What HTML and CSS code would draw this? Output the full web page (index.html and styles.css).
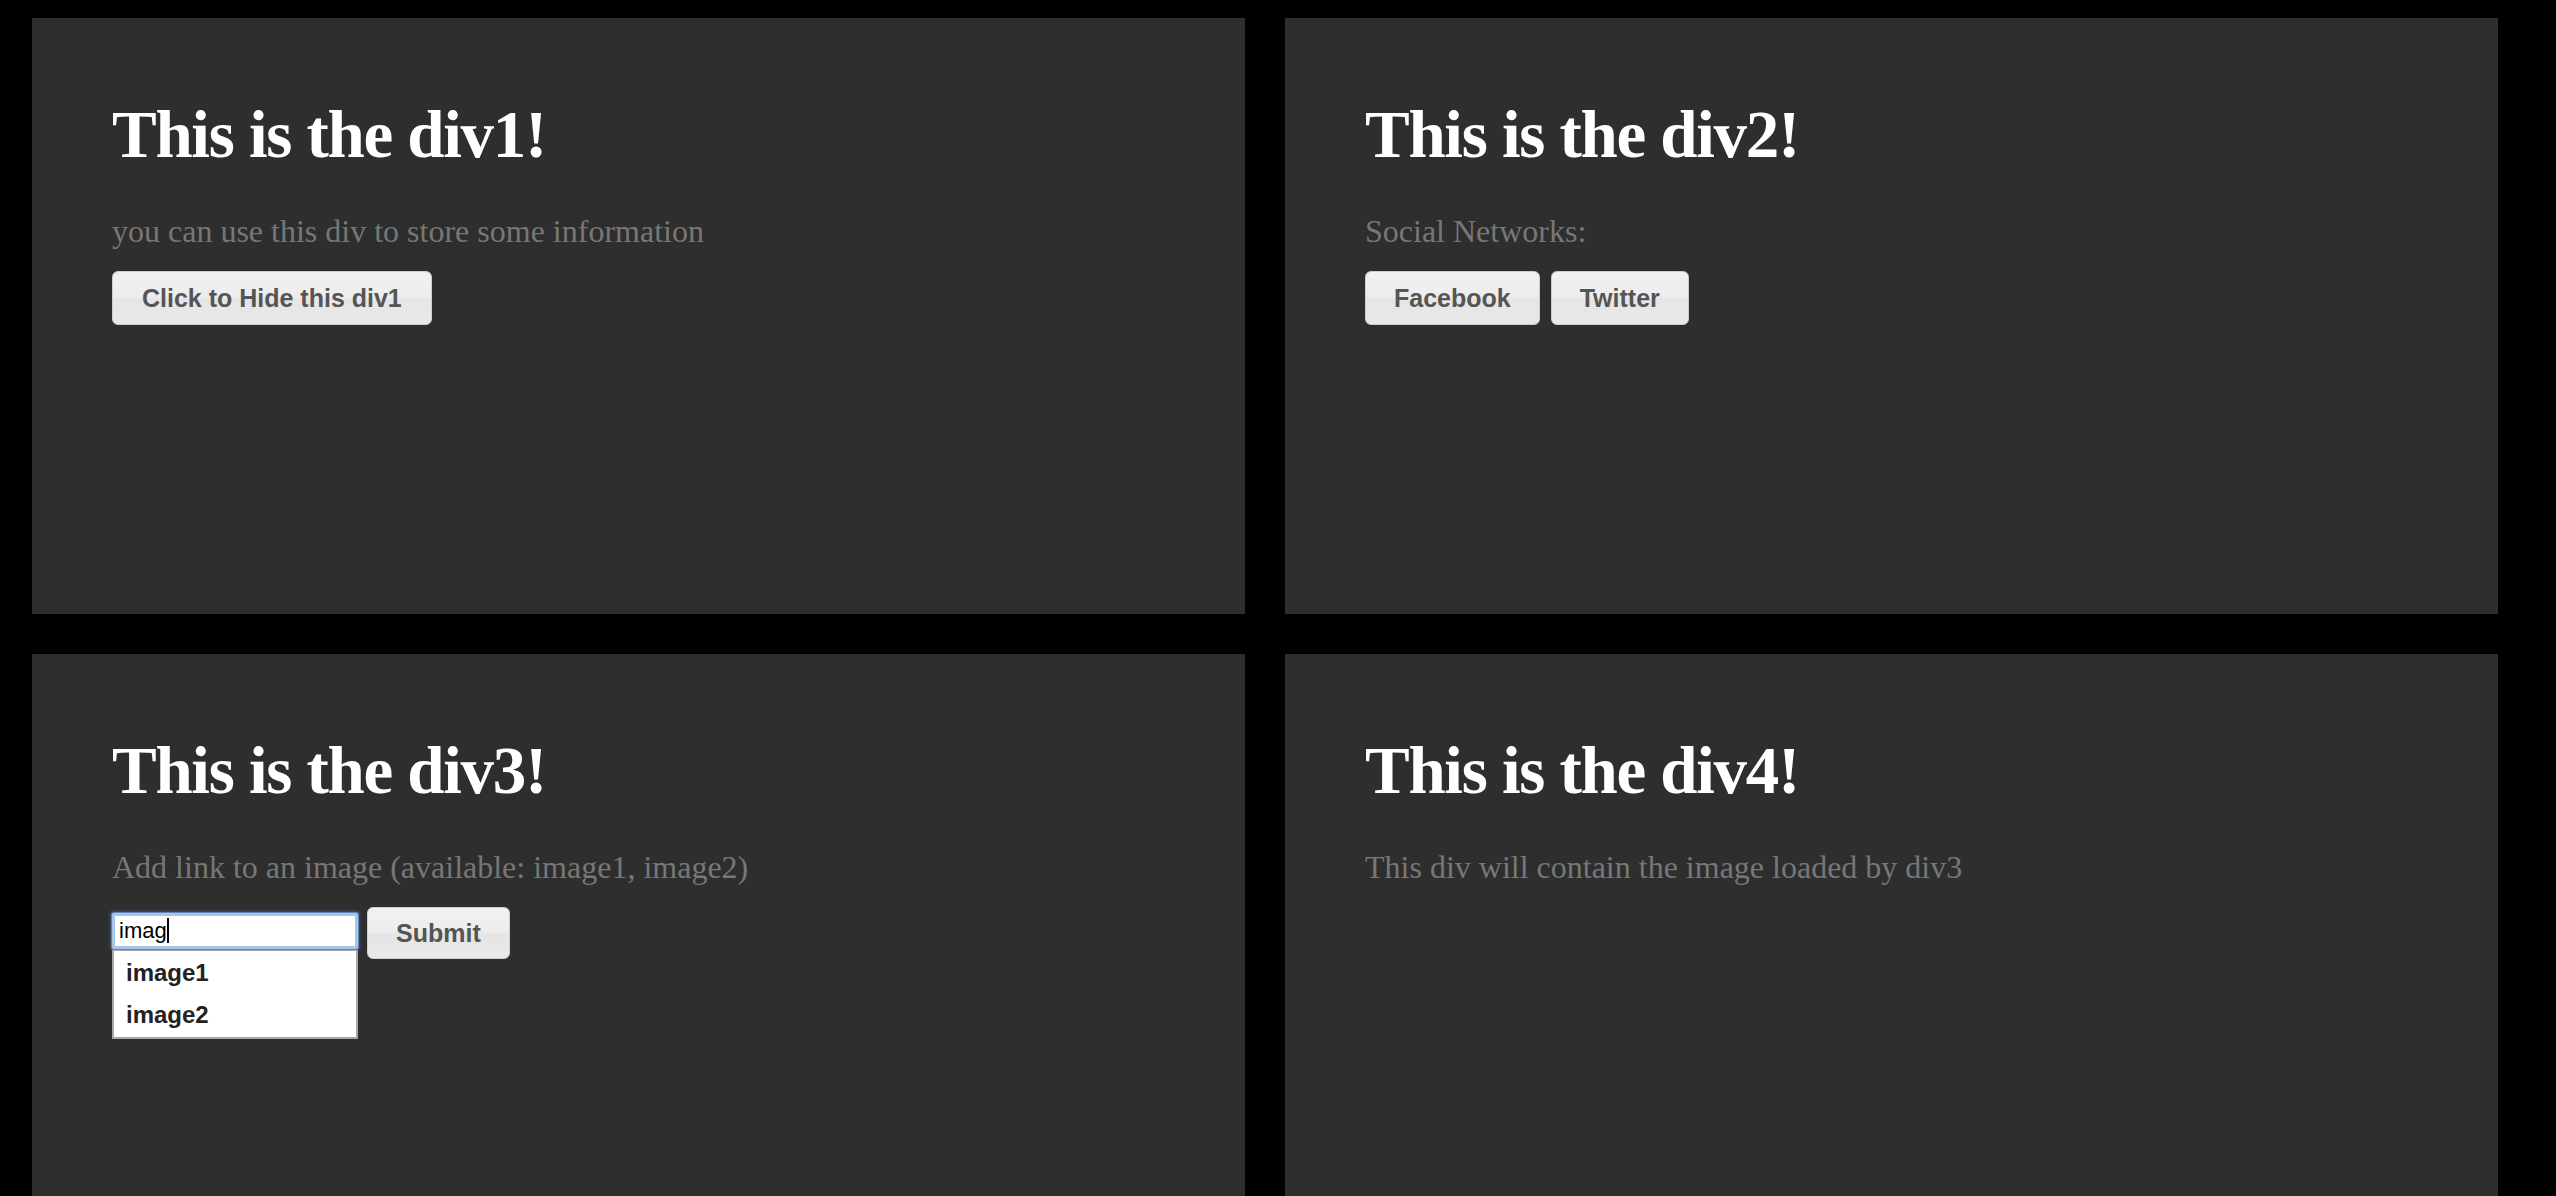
FILE: index.html
```html
<!DOCTYPE html>
<html>
<head>
<meta charset="utf-8">
<title>Divs</title>
<link rel="stylesheet" href="styles.css">
</head>
<body>
<div class="page">
  <div class="panel">
    <h1>This is the div1!</h1>
    <p>you can use this div to store some information</p>
    <div class="actions">
      <button class="btn btn-wide">Click to Hide this div1</button>
    </div>
  </div>
  <div class="panel">
    <h1>This is the div2!</h1>
    <p>Social Networks:</p>
    <div class="actions">
      <button class="btn">Facebook</button>
      <button class="btn">Twitter</button>
    </div>
  </div>
  <div class="panel">
    <h1>This is the div3!</h1>
    <p>Add link to an image (available: image1, image2)</p>
    <div class="actions form">
      <div class="field">
        <div class="input">imag<span class="caret"></span></div>
        <ul class="menu">
          <li>image1</li>
          <li>image2</li>
        </ul>
      </div>
      <button class="btn">Submit</button>
    </div>
  </div>
  <div class="panel">
    <h1>This is the div4!</h1>
    <p>This div will contain the image loaded by div3</p>
  </div>
</div>
</body>
</html>
```
FILE: styles.css
```css
html, body {
  margin: 0;
  padding: 0;
  background: #000;
}
.page {
  height: 100vh;
  overflow: hidden;
  box-sizing: border-box;
  padding: 18px 0 0 32px;
  display: grid;
  grid-template-columns: 1213px 1213px;
  grid-auto-rows: 596px;
  column-gap: 40px;
  row-gap: 40px;
}
.panel {
  background: #2e2e2e;
  box-sizing: border-box;
  padding: 79px 80px;
}
h1 {
  margin: 0;
  font-family: "Liberation Serif", serif;
  font-weight: bold;
  font-size: 67px;
  line-height: 74px;
  letter-spacing: -1.3px;
  color: #fff;
}
p {
  margin: 42px 0 0;
  font-family: "Liberation Serif", serif;
  font-size: 32px;
  line-height: 36px;
  color: #777;
}
.actions {
  margin-top: 22px;
  display: flex;
  align-items: flex-start;
  gap: 11px;
}
.btn {
  height: 54px;
  padding: 0 28px;
  border: 1px solid #cdcdcd;
  border-radius: 6px;
  background: linear-gradient(#f1f1f1 0%, #ededed 48%, #e5e5e5 52%, #e9e9e9 100%);
  color: #555;
  font-family: "Liberation Sans", Arial, sans-serif;
  font-weight: bold;
  font-size: 25px;
  cursor: pointer;
}
.btn-wide {
  padding: 0 29px;
}
.form {
  gap: 9px;
}
.form .btn {
  height: 52px;
}
.field {
  position: relative;
  margin-top: 6px;
}
.input {
  width: 246px;
  height: 36px;
  box-sizing: border-box;
  border: 3px solid #a8c6ec;
  box-shadow: 0 0 0 1px #5f86b8, 0 0 3px 2px rgba(70, 110, 160, 0.6);
  border-radius: 2px;
  background: #fff;
  padding: 0 0 0 4px;
  font-family: "Liberation Sans", Arial, sans-serif;
  font-size: 22px;
  line-height: 30px;
  color: #000;
}
.caret {
  display: inline-block;
  width: 2px;
  height: 25px;
  background: #000;
  vertical-align: -5px;
}
.menu {
  position: absolute;
  left: 0;
  top: 37px;
  width: 246px;
  box-sizing: border-box;
  margin: 0;
  padding: 1px 0 1px;
  list-style: none;
  background: #fff;
  border: 2px solid #a8a8a8;
  border-top-width: 1px;
}
.menu li {
  padding-left: 12px;
  font-family: "Liberation Sans", Arial, sans-serif;
  font-weight: bold;
  font-size: 24px;
  line-height: 42px;
  color: #222;
}
```
